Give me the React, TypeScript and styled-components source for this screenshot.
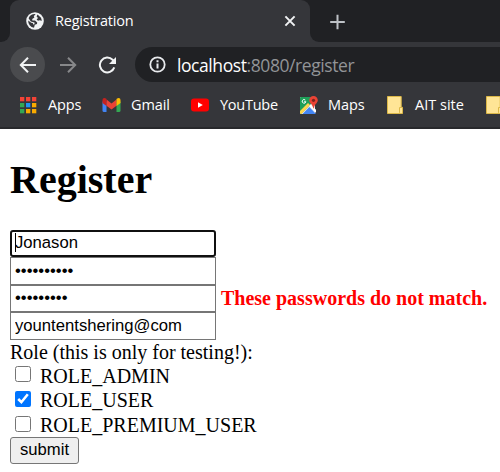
import React from "react";
import styled, { createGlobalStyle } from "styled-components";

const GlobalStyle = createGlobalStyle`
  * { box-sizing: border-box; }
  html, body { margin: 0; background: #fff; overflow: hidden; }
`;

const Window = styled.div`
  width: 500px;
  height: 472px;
  overflow: hidden;
  background: #fff;
`;

const Chrome = styled.header`
  height: 129px;
  background: #35363a;
  border-bottom: 2px solid #28292c;
  font-family: "Open Sans", "Noto Sans", sans-serif;
  color: #fff;
  white-space: nowrap;
  overflow: hidden;
`;

const TabStrip = styled.div`
  display: flex;
  height: 42px;
  background: #35363a;
`;

const StripEdge = styled.div`
  width: 10px;
  background: #202124;
  border-bottom-right-radius: 9px;
`;

const TabSlot = styled.div`
  width: 300px;
  background: #202124;
`;

const Tab = styled.div`
  display: flex;
  align-items: center;
  height: 42px;
  padding: 0 14px 0 16px;
  background: #35363a;
  border-radius: 9px 9px 0 0;
`;

const StripRest = styled.div`
  flex: 1;
  background: #202124;
  border-bottom-left-radius: 9px;
  padding: 13px 0 0 20px;
`;

const Label = styled.span<{ $size: number; $spacing: number }>`
  font-size: ${(p) => p.$size}px;
  letter-spacing: ${(p) => p.$spacing}px;
  line-height: 20px;
`;

const TabTitle = styled(Label)`
  flex: 1;
  margin-left: 11px;
`;

const Toolbar = styled.div`
  display: flex;
  align-items: center;
  height: 45px;
  padding: 0 0 0 10px;
`;

const NavButton = styled.div<{ $active?: boolean }>`
  display: flex;
  align-items: center;
  justify-content: center;
  width: 35px;
  height: 35px;
  margin-right: 5px;
  border-radius: 50%;
  background: ${(p) => (p.$active ? "#4a4b4e" : "transparent")};
`;

const AddressBar = styled.div`
  display: flex;
  align-items: center;
  flex: 1;
  height: 35px;
  margin-left: 5px;
  padding-left: 14px;
  border-radius: 18px 0 0 18px;
  background: #202124;
`;

const Url = styled(Label)`
  margin-left: 11px;
`;

const Dim = styled.span`
  color: #929497;
`;

const BookmarkBar = styled.div`
  display: flex;
  align-items: center;
  height: 36px;
  padding-left: 20px;
`;

const Bookmark = styled.div<{ $width: number; $gap: number }>`
  display: flex;
  align-items: center;
  flex: none;
  gap: ${(p) => p.$gap}px;
  width: ${(p) => p.$width}px;
`;

const Page = styled.main`
  padding: 31px 10px 0;
  font: 20px/24px "Liberation Serif", serif;
  color: #000;
  white-space: nowrap;
`;

const Heading = styled.h1`
  margin: 0 0 30px;
  height: 40px;
  font-size: 40px;
  line-height: 40px;
`;

const Row = styled.div`
  display: flex;
  align-items: center;
  height: 27px;
`;

const Field = styled.input<{ $height: number; $focused?: boolean }>`
  display: block;
  width: 206px;
  height: ${(p) => p.$height}px;
  margin: 0;
  padding: ${(p) => (p.$focused ? "0 3px 2px" : "0 4px 1px")};
  border: ${(p) => (p.$focused ? "2px solid #101010" : "1px solid #767676")};
  border-radius: ${(p) => (p.$focused ? 3 : 0)}px;
  outline: none;
  background: #fff;
  font: 16.67px "Liberation Sans", Arial, sans-serif;
  color: #000;
`;

const FocusedCell = styled.div`
  position: relative;
  width: 206px;
`;

const Caret = styled.div`
  position: absolute;
  left: 5px;
  top: 3px;
  width: 1px;
  height: 19px;
  background: #000;
`;

const ErrorText = styled.span`
  margin: 0 0 2px 5px;
  font-weight: bold;
  color: #f00;
`;

const RoleCaption = styled.div`
  height: 24px;
`;

const Choice = styled.label<{ $height: number }>`
  display: flex;
  align-items: flex-start;
  height: ${(p) => p.$height}px;
`;

const Check = styled.input`
  flex: none;
  width: 16px;
  height: 16px;
  margin: 2px 9px 0 5px;
`;

const ChoiceText = styled.span<{ $lift?: number }>`
  margin-top: ${(p) => -(p.$lift ?? 0)}px;
`;

const Submit = styled.button`
  display: block;
  width: 69px;
  height: 27px;
  padding: 0 0 1px;
  border: 1px solid #767676;
  border-radius: 3px;
  background: #efefef;
  font: 16.67px "Liberation Sans", Arial, sans-serif;
  color: #000;
`;

const Globe = () => (
  <svg width="18" height="18" viewBox="0 0 18 18">
    <circle cx="9" cy="9" r="8.8" fill="#f1f3f4" />
    <path d="M9.6 2.1 7.8 4.2 8.4 5.6 6.2 7 6.4 8.6H9l2.2 1.8-.2 1.7-2.2.7-.8 3A7 7 0 0 1 2.2 8.4l3 2.4 1.6.3.4 1.3 1.3-.2v-1.6L4.8 9.5 2.6 6.2A7 7 0 0 1 9.6 2.1Z" fill="#35363a" />
    <path d="M11.5 2.5 15 5.8 15.9 8.8 13.6 8.3 12 8.8 10.6 7.5 12 5.9 10.6 4.4Z" fill="#35363a" />
  </svg>
);

const Close = () => (
  <svg width="12" height="12" viewBox="0 0 12 12">
    <path d="m1.4 1.4 9.2 9.2M10.6 1.4 1.4 10.6" stroke="#f1f3f4" strokeWidth="2" />
  </svg>
);

const Plus = () => (
  <svg width="16" height="16" viewBox="0 0 16 16">
    <path d="M7.5.7v14.6M.2 8h14.6" stroke="#bdc1c6" strokeWidth="2" />
  </svg>
);

const Arrow = ({ forward = false }: { forward?: boolean }) => (
  <svg width="18" height="18" viewBox="0 0 18 18">
    <path
      d={forward ? "M1 9h15M9 1.8 16.2 9 9 16.2" : "M17 9H2M9 1.8 1.8 9 9 16.2"}
      fill="none"
      stroke={forward ? "#87888a" : "#f1f3f4"}
      strokeWidth="2"
    />
  </svg>
);

const Reload = () => (
  <svg width="19" height="18" viewBox="0 0 19 18">
    <path d="M16.3 11.4A7.4 7.4 0 1 1 14.6 3.8L16.2 5.4" fill="none" stroke="#f1f3f4" strokeWidth="2" />
    <path d="M18 1v7h-7Z" fill="#f1f3f4" />
  </svg>
);

const Info = () => (
  <svg width="17" height="17" viewBox="0 0 17 17">
    <circle cx="8.5" cy="8.5" r="7.2" fill="none" stroke="#e8eaed" strokeWidth="1.8" />
    <path d="M8.5 7.4v5M8.5 4.2v2" stroke="#e8eaed" strokeWidth="2" />
  </svg>
);

const gridColors = ["#f44336", "#f44336", "#f44336", "#34a853", "#2196f3", "#f9ab00", "#34a853", "#f9ab00", "#f9ab00"];

const AppsGrid = () => (
  <svg width="17" height="17" viewBox="0 0 17 17">
    {gridColors.map((color, i) => (
      <rect key={i} x={(i % 3) * 6} y={Math.floor(i / 3) * 6} width="4.3" height="4.3" fill={color} />
    ))}
  </svg>
);

const GmailLogo = () => (
  <svg width="19" height="14" viewBox="0 0 19 14">
    <path d="M.5 3.5h4V14H2Q.5 14 .5 12.5Z" fill="#4285f4" />
    <path d="M14.5 3.5h4v9q0 1.5-1.5 1.5h-2.5Z" fill="#34a853" />
    <path d="m4.5 1.5 5 4 5-4v6.2l-5 3.9-5-3.9Z" fill="#ea4335" />
    <path d="M.5 5V2Q.5 0 2.4 0q.8 0 1.5.6l.6.5V8Z" fill="#c5221f" />
    <path d="M18.5 5V2Q18.5 0 16.6 0q-.8 0-1.5.6l-.6.5V8Z" fill="#fbbc04" />
  </svg>
);

const YouTubeLogo = () => (
  <svg width="18" height="14" viewBox="0 0 18 14">
    <rect y=".5" width="18" height="13" rx="3" fill="#f00" />
    <path d="m7 4.3 4.8 2.7L7 9.7Z" fill="#fff" />
  </svg>
);

const MapsLogo = () => (
  <svg width="18" height="18" viewBox="0 0 18 18">
    <path d="M0 2q0-1 1-1h14v17H1q-1 0-1-1Z" fill="#e8eaed" />
    <path d="M0 2q0-1 1-1h10v7L1 18q-1 0-1-1Z" fill="#1e9e58" />
    <path d="M0 15 8 7l2 2-8.5 9H1q-1 0-1-1Z" fill="#fdd44b" />
    <path d="m2.5 18 6.8-7 6.7 7Z" fill="#4285f4" />
    <path d="m9.3 9.8 1.4-1.4L16 13.8V17Z" fill="#fff" />
    <path d="M5.3 4.1A1.8 1.8 0 1 0 5.8 5.7H4.2" fill="none" stroke="#fff" strokeWidth="1" />
    <path d="M13.5 0A4.3 4.3 0 0 1 17.8 4.3c0 2.9-3.3 3.6-4.1 8.3h-.4C12.6 7.9 9.2 7.2 9.2 4.3A4.3 4.3 0 0 1 13.5 0Z" fill="#ea4335" />
    <circle cx="13.5" cy="4.3" r="1.6" fill="#7b241c" />
  </svg>
);

const Folder = () => (
  <svg width="16" height="18" viewBox="0 0 16 18">
    <path d="M.5.5h13.7v10.8h1.3v6.2H.5Z" fill="#ffe596" stroke="#dcb848" />
    <path d="M14.2 11.5h-1.7v5.3" fill="none" stroke="#dcb848" />
  </svg>
);

export default function App() {
  return (
    <Window>
      <GlobalStyle />
      <Chrome>
        <TabStrip>
          <StripEdge />
          <TabSlot>
            <Tab>
              <Globe />
              <TabTitle $size={14.5} $spacing={-0.23}>Registration</TabTitle>
              <Close />
            </Tab>
          </TabSlot>
          <StripRest><Plus /></StripRest>
        </TabStrip>
        <Toolbar>
          <NavButton $active><Arrow /></NavButton>
          <NavButton><Arrow forward /></NavButton>
          <NavButton><Reload /></NavButton>
          <AddressBar>
            <Info />
            <Url $size={17.5} $spacing={-0.42}>localhost<Dim>:8080/register</Dim></Url>
          </AddressBar>
        </Toolbar>
        <BookmarkBar>
          <Bookmark $width={82} $gap={11}><AppsGrid /><Label $size={14.5} $spacing={-0.1}>Apps</Label></Bookmark>
          <Bookmark $width={89} $gap={10}><GmailLogo /><Label $size={14.5} $spacing={-0.1}>Gmail</Label></Bookmark>
          <Bookmark $width={109} $gap={11}><YouTubeLogo /><Label $size={14.5} $spacing={-0.25}>YouTube</Label></Bookmark>
          <Bookmark $width={87} $gap={10}><MapsLogo /><Label $size={14.5} $spacing={-0.1}>Maps</Label></Bookmark>
          <Bookmark $width={99} $gap={12}><Folder /><Label $size={14.5} $spacing={0}>AIT site</Label></Bookmark>
          <Bookmark $width={20} $gap={0}><Folder /></Bookmark>
        </BookmarkBar>
      </Chrome>
      <Page>
        <Heading>Register</Heading>
        <form onSubmit={(e) => e.preventDefault()}>
          <FocusedCell>
            <Field $height={27} $focused defaultValue="Jonason" />
            <Caret />
          </FocusedCell>
          <Field $height={28} type="password" defaultValue="abcdefghij" />
          <Row>
            <Field $height={27} type="password" defaultValue="abcdefghi" />
            <ErrorText>These passwords do not match.</ErrorText>
          </Row>
          <Field $height={28} defaultValue="yountentshering@com" />
          <RoleCaption>Role (this is only for testing!):</RoleCaption>
          <Choice $height={25}><Check type="checkbox" /><ChoiceText>ROLE_ADMIN</ChoiceText></Choice>
          <Choice $height={25}><Check type="checkbox" defaultChecked /><ChoiceText $lift={1}>ROLE_USER</ChoiceText></Choice>
          <Choice $height={23}><Check type="checkbox" /><ChoiceText $lift={1}>ROLE_PREMIUM_USER</ChoiceText></Choice>
          <Submit>submit</Submit>
        </form>
      </Page>
    </Window>
  );
}
